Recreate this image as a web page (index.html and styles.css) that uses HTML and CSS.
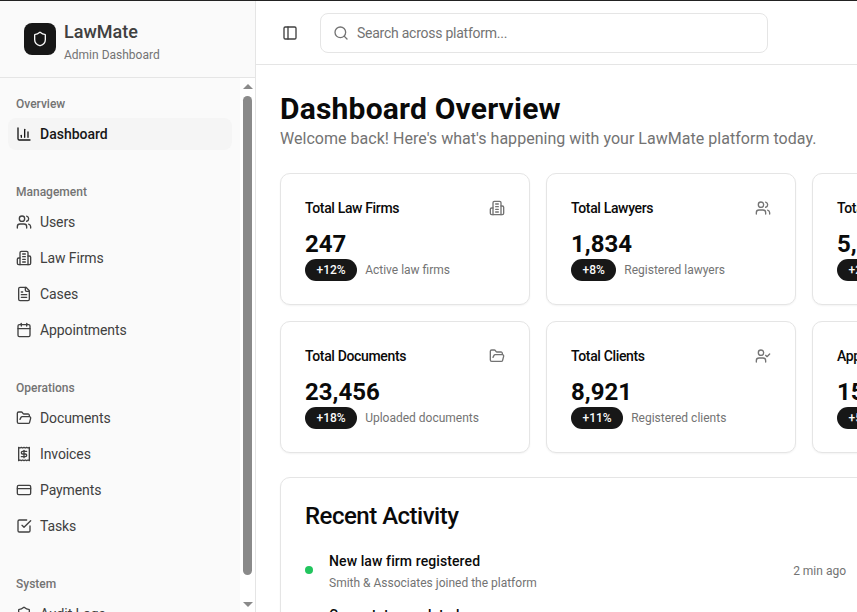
FILE: index.html
```html
<!DOCTYPE html>
<html>
<head>
<meta charset="utf-8">
<title>LawMate Admin Dashboard</title>
<link rel="stylesheet" href="styles.css">
</head>
<body>
<svg class="sprite" xmlns="http://www.w3.org/2000/svg">
    <symbol id="i-shield" viewBox="0 0 24 24"><path d="M20 13c0 5-3.5 7.5-7.66 8.95a1 1 0 0 1-.67-.01C7.5 20.5 4 18 4 13V6a1 1 0 0 1 1-1c2 0 4.5-1.2 6.24-2.72a1.17 1.17 0 0 1 1.52 0C14.51 3.81 17 5 19 5a1 1 0 0 1 1 1z"/></symbol>
    <symbol id="i-chart" viewBox="0 0 24 24"><path d="M3 3v16a2 2 0 0 0 2 2h16"/><path d="M18 17V9"/><path d="M13 17V5"/><path d="M8 17v-3"/></symbol>
    <symbol id="i-users" viewBox="0 0 24 24"><path d="M16 21v-2a4 4 0 0 0-4-4H6a4 4 0 0 0-4 4v2"/><path d="M16 3.128a4 4 0 0 1 0 7.744"/><path d="M22 21v-2a4 4 0 0 0-3-3.87"/><circle cx="9" cy="7" r="4"/></symbol>
    <symbol id="i-building" viewBox="0 0 24 24"><path d="M6 22V4a2 2 0 0 1 2-2h8a2 2 0 0 1 2 2v18Z"/><path d="M6 12H4a2 2 0 0 0-2 2v6a2 2 0 0 0 2 2h2"/><path d="M18 9h2a2 2 0 0 1 2 2v9a2 2 0 0 1-2 2h-2"/><path d="M10 6h4"/><path d="M10 10h4"/><path d="M10 14h4"/><path d="M10 18h4"/></symbol>
    <symbol id="i-file" viewBox="0 0 24 24"><path d="M15 2H6a2 2 0 0 0-2 2v16a2 2 0 0 0 2 2h12a2 2 0 0 0 2-2V7Z"/><path d="M14 2v4a2 2 0 0 0 2 2h4"/><path d="M10 9H8"/><path d="M16 13H8"/><path d="M16 17H8"/></symbol>
    <symbol id="i-calendar" viewBox="0 0 24 24"><path d="M8 2v4"/><path d="M16 2v4"/><rect width="18" height="18" x="3" y="4" rx="2"/><path d="M3 10h18"/></symbol>
    <symbol id="i-folder" viewBox="0 0 24 24"><path d="m6 14 1.5-2.9A2 2 0 0 1 9.24 10H20a2 2 0 0 1 1.94 2.5l-1.54 6a2 2 0 0 1-1.95 1.5H4a2 2 0 0 1-2-2V5a2 2 0 0 1 2-2h3.9a2 2 0 0 1 1.69.9l.81 1.2a2 2 0 0 0 1.67.9H18a2 2 0 0 1 2 2v2"/></symbol>
    <symbol id="i-receipt" viewBox="0 0 24 24"><path d="M4 2v20l2-1 2 1 2-1 2 1 2-1 2 1 2-1 2 1V2l-2 1-2-1-2 1-2-1-2 1-2-1-2 1Z"/><path d="M16 8h-6a2 2 0 1 0 0 4h4a2 2 0 1 1 0 4H8"/><path d="M12 17.5v-11"/></symbol>
    <symbol id="i-card" viewBox="0 0 24 24"><rect width="20" height="14" x="2" y="5" rx="2"/><path d="M2 10h20"/></symbol>
    <symbol id="i-check" viewBox="0 0 24 24"><path d="M21 12v7a2 2 0 0 1-2 2H5a2 2 0 0 1-2-2V5a2 2 0 0 1 2-2h11"/><path d="m9 11 3 3L22 4"/></symbol>
    <symbol id="i-panel" viewBox="0 0 24 24"><rect width="18" height="18" x="3" y="3" rx="2"/><path d="M9 3v18"/></symbol>
    <symbol id="i-search" viewBox="0 0 24 24"><path d="m21 21-4.3-4.3"/><circle cx="11" cy="11" r="8"/></symbol>
    <symbol id="i-usercheck" viewBox="0 0 24 24"><path d="M16 21v-2a4 4 0 0 0-4-4H6a4 4 0 0 0-4 4v2"/><circle cx="9" cy="7" r="4"/><path d="m16 11 2 2 4-4"/></symbol>
</svg>

<aside class="sidebar">
    <div class="brand">
        <div class="brand-logo"><svg class="icon"><use href="#i-shield"/></svg></div>
        <div class="brand-text">
            <div class="brand-name">LawMate</div>
            <div class="brand-sub">Admin Dashboard</div>
        </div>
    </div>
    <div class="sidebar-body">
        <nav class="nav">
            <div class="nav-group">
                <div class="nav-label">Overview</div>
                <a class="nav-item active"><svg class="icon"><use href="#i-chart"/></svg>Dashboard</a>
            </div>
            <div class="nav-group">
                <div class="nav-label">Management</div>
                <a class="nav-item"><svg class="icon"><use href="#i-users"/></svg>Users</a>
                <a class="nav-item"><svg class="icon"><use href="#i-building"/></svg>Law Firms</a>
                <a class="nav-item"><svg class="icon"><use href="#i-file"/></svg>Cases</a>
                <a class="nav-item"><svg class="icon"><use href="#i-calendar"/></svg>Appointments</a>
            </div>
            <div class="nav-group">
                <div class="nav-label">Operations</div>
                <a class="nav-item"><svg class="icon"><use href="#i-folder"/></svg>Documents</a>
                <a class="nav-item"><svg class="icon"><use href="#i-receipt"/></svg>Invoices</a>
                <a class="nav-item"><svg class="icon"><use href="#i-card"/></svg>Payments</a>
                <a class="nav-item"><svg class="icon"><use href="#i-check"/></svg>Tasks</a>
            </div>
            <div class="nav-group">
                <div class="nav-label">System</div>
                <a class="nav-item"><svg class="icon"><use href="#i-shield"/></svg>Audit Logs</a>
            </div>
        </nav>
        <div class="scrollbar">
            <span class="arrow-up"></span>
            <span class="thumb"></span>
            <span class="arrow-down"></span>
        </div>
    </div>
</aside>

<div class="content">
    <header class="topbar">
        <svg class="icon toggle"><use href="#i-panel"/></svg>
        <div class="search">
            <svg class="icon"><use href="#i-search"/></svg>
            <span>Search across platform...</span>
        </div>
    </header>
    <main class="main">
        <h1>Dashboard Overview</h1>
        <p class="lead">Welcome back! Here's what's happening with your LawMate platform today.</p>

        <div class="stats">
            <div class="card stat">
                <div class="stat-head"><span>Total Law Firms</span><svg class="icon"><use href="#i-building"/></svg></div>
                <div class="stat-value">247</div>
                <div class="stat-foot"><span class="pill">+12%</span><span>Active law firms</span></div>
            </div>
            <div class="card stat">
                <div class="stat-head"><span>Total Lawyers</span><svg class="icon"><use href="#i-users"/></svg></div>
                <div class="stat-value">1,834</div>
                <div class="stat-foot"><span class="pill">+8%</span><span>Registered lawyers</span></div>
            </div>
            <div class="card stat">
                <div class="stat-head"><span>Total Cases</span><svg class="icon"><use href="#i-file"/></svg></div>
                <div class="stat-value">5,672</div>
                <div class="stat-foot"><span class="pill">+23%</span><span>Active cases</span></div>
            </div>
            <div class="card stat">
                <div class="stat-head"><span>Total Documents</span><svg class="icon"><use href="#i-folder"/></svg></div>
                <div class="stat-value">23,456</div>
                <div class="stat-foot"><span class="pill">+18%</span><span>Uploaded documents</span></div>
            </div>
            <div class="card stat">
                <div class="stat-head"><span>Total Clients</span><svg class="icon"><use href="#i-usercheck"/></svg></div>
                <div class="stat-value">8,921</div>
                <div class="stat-foot"><span class="pill">+11%</span><span>Registered clients</span></div>
            </div>
            <div class="card stat">
                <div class="stat-head"><span>Appointments</span><svg class="icon"><use href="#i-calendar"/></svg></div>
                <div class="stat-value">156</div>
                <div class="stat-foot"><span class="pill">+5%</span><span>This week</span></div>
            </div>
        </div>

        <section class="card activity">
            <h2>Recent Activity</h2>
            <div class="activity-row">
                <span class="dot"></span>
                <div class="activity-text">
                    <div class="activity-title">New law firm registered</div>
                    <div class="activity-sub">Smith &amp; Associates joined the platform</div>
                </div>
                <span class="activity-time">2 min ago</span>
            </div>
            <div class="activity-row">
                <span class="dot"></span>
                <div class="activity-text">
                    <div class="activity-title">Case status updated</div>
                    <div class="activity-sub">Case moved to review</div>
                </div>
                <span class="activity-time">15 min ago</span>
            </div>
        </section>
    </main>
</div>
</body>
</html>
```

FILE: styles.css
```css
html, body {
    margin: 0;
    padding: 0;
    height: 100%;
}

body {
    display: flex;
    box-sizing: border-box;
    border-top: 1px solid #222;
    overflow: hidden;
    background: #fff;
    color: #0a0a0a;
    font-family: Roboto, sans-serif;
}

.sprite {
    display: none;
}

.icon {
    width: 16px;
    height: 16px;
    flex: none;
    fill: none;
    stroke: currentColor;
    stroke-width: 2;
    stroke-linecap: round;
    stroke-linejoin: round;
}

/* sidebar */
.sidebar {
    width: 256px;
    flex: none;
    box-sizing: border-box;
    display: flex;
    flex-direction: column;
    background: #fafafa;
    border-right: 1px solid #e5e5e5;
}

.brand {
    height: 77px;
    flex: none;
    box-sizing: border-box;
    display: flex;
    align-items: center;
    gap: 8px;
    padding: 0 24px;
    border-bottom: 1px solid #e5e5e5;
}

.brand-logo {
    width: 32px;
    height: 32px;
    border-radius: 8px;
    background: #171717;
    color: #fafafa;
    display: flex;
    align-items: center;
    justify-content: center;
}

.brand-text {
    padding-top: 4px;
}

.brand-name {
    font-size: 18px;
    line-height: 24px;
    font-weight: 500;
    color: #404040;
}

.brand-sub {
    margin-top: 3px;
    font-size: 12px;
    line-height: 16px;
    color: #737373;
}

.sidebar-body {
    flex: 1;
    min-height: 0;
    display: flex;
}

.nav {
    flex: 1;
    min-width: 0;
    overflow: hidden;
    padding: 8px 8px 0;
}

/* the page's scrollbar is drawn, the browser hides the real one */
.scrollbar {
    width: 15px;
    flex: none;
    display: flex;
    flex-direction: column;
    align-items: center;
    padding: 6px 0 5px;
    box-sizing: border-box;
    background: #fff;
}

.thumb {
    width: 9px;
    flex: 1;
    margin: 7px 0 27px;
    border-radius: 5px;
    background: #8a8a8a;
}

.arrow-up, .arrow-down {
    width: 0;
    height: 0;
    border-left: 5px solid transparent;
    border-right: 5px solid transparent;
}

.arrow-up {
    border-bottom: 5px solid #8a8a8a;
}

.arrow-down {
    border-top: 5px solid #8a8a8a;
}

.nav-group {
    margin-bottom: 24px;
}

.nav-label {
    height: 32px;
    padding: 2px 8px 0;
    box-sizing: border-box;
    line-height: 32px;
    font-size: 12px;
    font-weight: 500;
    color: #737373;
}

.nav-item {
    display: flex;
    align-items: center;
    gap: 8px;
    height: 32px;
    margin-bottom: 4px;
    padding: 0 8px;
    border-radius: 8px;
    font-size: 14px;
    letter-spacing: -0.1px;
    color: #404040;
}

.nav-item.active {
    background: #f5f5f5;
    color: #171717;
    font-weight: 500;
    letter-spacing: 0;
}

/* main area */
.content {
    flex: 1;
    min-width: 0;
    display: flex;
    flex-direction: column;
}

.topbar {
    height: 64px;
    flex: none;
    box-sizing: border-box;
    display: flex;
    align-items: center;
    gap: 22px;
    padding: 1px 26px 0;
    border-bottom: 1px solid #e5e5e5;
}

.toggle {
    color: #404040;
}

.search {
    width: 448px;
    height: 40px;
    box-sizing: border-box;
    display: flex;
    align-items: center;
    gap: 8px;
    padding: 0 12px;
    border: 1px solid #e5e5e5;
    border-radius: 8px;
    font-size: 14px;
    letter-spacing: -0.25px;
    color: #737373;
}

.main {
    padding: 26px 24px 24px;
}

h1 {
    margin: 0;
    font-size: 30px;
    line-height: 36px;
    font-weight: 700;
    letter-spacing: 0.2px;
}

.lead {
    margin: 0 0 22px;
    font-size: 16px;
    line-height: 24px;
    letter-spacing: 0.03px;
    color: #737373;
    white-space: nowrap;
}

.card {
    box-sizing: border-box;
    background: #fff;
    border: 1px solid #e5e5e5;
    border-radius: 10px;
    box-shadow: 0 1px 2px rgba(0, 0, 0, 0.05);
}

.stats {
    display: grid;
    grid-template-columns: repeat(3, 250px);
    gap: 16px;
    margin-bottom: 24px;
}

.stat {
    height: 132px;
    padding: 24px;
}

.stat-head {
    display: flex;
    justify-content: space-between;
    align-items: center;
    height: 20px;
    margin-bottom: 13px;
    font-size: 14px;
    font-weight: 500;
    letter-spacing: -0.35px;
}

.stat-head .icon {
    color: #737373;
}

.stat-value {
    font-size: 24px;
    line-height: 26px;
    font-weight: 700;
}

.stat-foot {
    display: flex;
    align-items: center;
    gap: 8px;
    margin-top: 2px;
    font-size: 12px;
    color: #737373;
}

.pill {
    height: 22px;
    line-height: 22px;
    padding: 0 11.5px;
    border-radius: 11px;
    background: #171717;
    color: #fafafa;
    font-weight: 500;
}

.activity {
    width: 591px;
    padding: 24px;
}

h2 {
    margin: 0 0 21px;
    font-size: 24px;
    line-height: 28px;
    font-weight: 500;
    letter-spacing: -0.5px;
}

.activity-row {
    display: flex;
    align-items: center;
    gap: 16px;
    margin-bottom: 14px;
}

.dot {
    width: 8px;
    height: 8px;
    margin-bottom: 2px;
    border-radius: 50%;
    background: #22c55e;
}

.activity-text {
    flex: 1;
}

.activity-title {
    font-size: 14px;
    line-height: 20px;
    font-weight: 500;
    letter-spacing: 0.1px;
}

.activity-sub {
    margin-top: 4px;
    font-size: 12px;
    line-height: 16px;
    color: #737373;
}

.activity-time {
    font-size: 12px;
    color: #737373;
}
```
